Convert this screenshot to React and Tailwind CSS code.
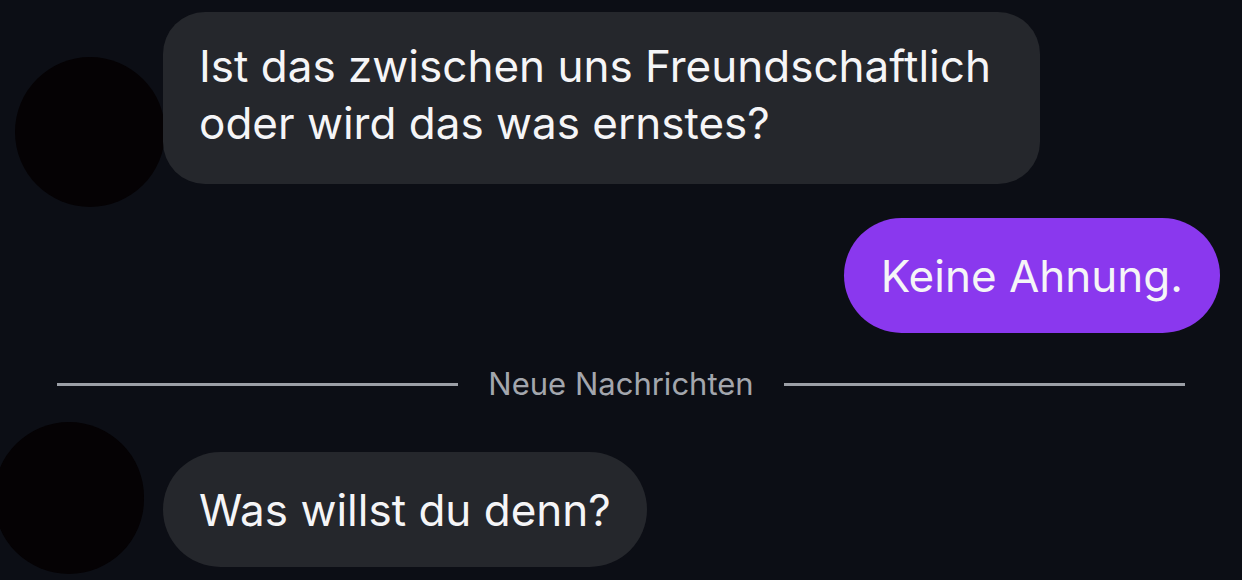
import React from "react";

const Avatar = ({ className }) => (
  <div className={`shrink-0 rounded-full bg-[#050204] ${className}`} />
);

export default function App() {
  return (
    <div
      className="w-[1242px] h-[580px] overflow-hidden bg-[#0c0e15] text-[#f5f5f7] flex flex-col"
      style={{ fontFamily: "Inter, 'Noto Sans', sans-serif" }}
    >
      {/* incoming message */}
      <div className="flex items-start">
        <Avatar className="w-[150px] h-[150px] ml-[15px] mt-[57px]" />
        <div className="-ml-[2px] mt-[12px] w-[877px] h-[172px] rounded-[42px] bg-[#25272c] pl-[36px] pt-[26px] text-[44px] leading-[57px]">
          Ist das zwischen uns Freundschaftlich
          <br />
          oder wird das was ernstes?
        </div>
      </div>

      {/* outgoing message */}
      <div className="flex justify-end pr-[22px] mt-[11px]">
        <div className="h-[115px] rounded-full bg-[#8a38ee] px-[37px] flex items-center text-[44px]">
          Keine Ahnung.
        </div>
      </div>

      {/* unread divider */}
      <div className="flex items-center px-[57px] mt-[36px] h-[30px]">
        <div className="flex-1 h-[3px] bg-[#9c9fa6]" />
        <span className="px-[30px] text-[31px] text-[#a3a6ad]">Neue Nachrichten</span>
        <div className="flex-1 h-[3px] bg-[#9c9fa6]" />
      </div>

      {/* incoming message */}
      <div className="flex items-start mt-[23px]">
        <Avatar className="w-[150px] h-[152px] -ml-[6px]" />
        <div className="ml-[19px] mt-[30px] h-[115px] rounded-full bg-[#25272c] px-[36px] flex items-center text-[44px]">
          Was willst du denn?
        </div>
      </div>
    </div>
  );
}
